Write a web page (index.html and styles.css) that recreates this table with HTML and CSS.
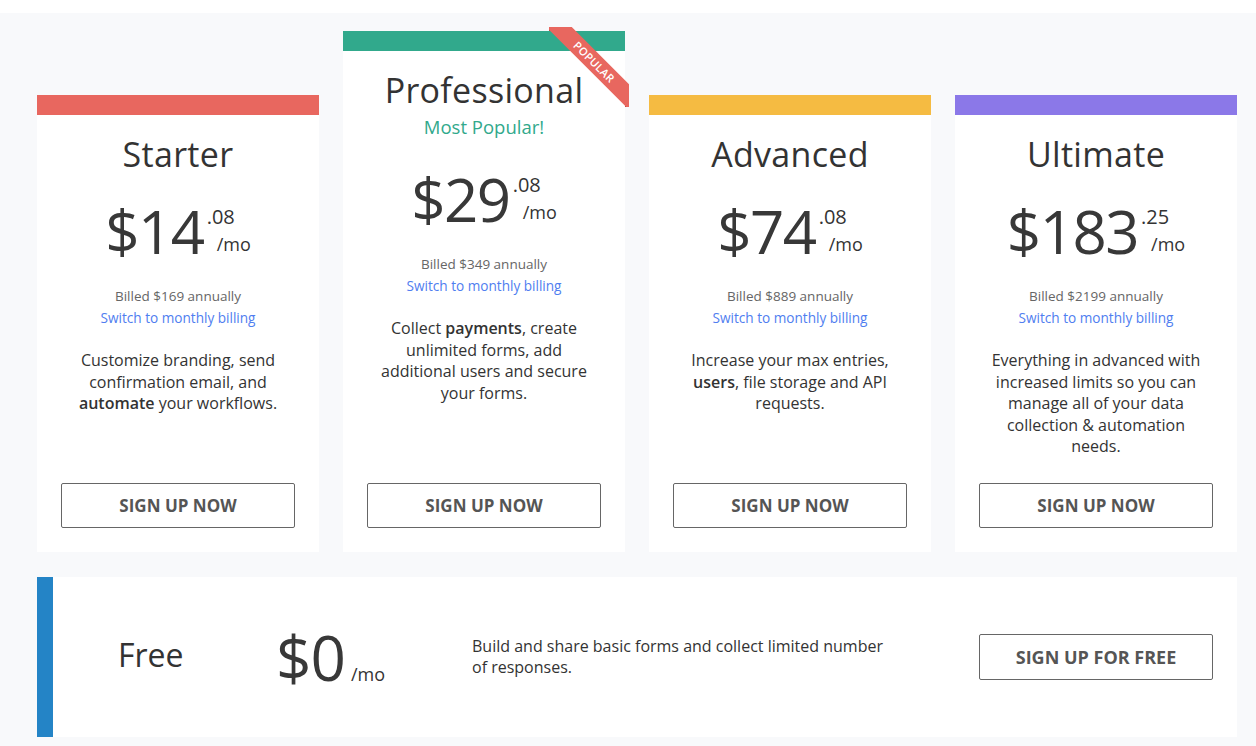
FILE: index.html
```html
<!DOCTYPE html>
<html>
<head>
<meta charset="utf-8">
<link rel="stylesheet" href="styles.css">
</head>
<body>
<div class="pricing">
  <div class="plans">
    <div class="card">
      <div class="bar red"></div>
      <div class="body">
        <h2 class="title">Starter</h2>
        <div class="price"><span class="amount">$14</span><span class="cents-col"><span class="cents">.08</span><span class="per">/mo</span></span></div>
        <div class="billed">Billed $169 annually</div>
        <a class="switch">Switch to monthly billing</a>
        <p class="desc">Customize branding, send confirmation email, and <b>automate</b> your workflows.</p>
        <button class="btn">SIGN UP NOW</button>
      </div>
    </div>
    <div class="card featured">
      <div class="bar green"></div>
      <div class="ribbon"><span class="band">POPULAR</span></div>
      <div class="body">
        <h2 class="title">Professional</h2>
        <div class="popular">Most Popular!</div>
        <div class="price"><span class="amount">$29</span><span class="cents-col"><span class="cents">.08</span><span class="per">/mo</span></span></div>
        <div class="billed">Billed $349 annually</div>
        <a class="switch">Switch to monthly billing</a>
        <p class="desc">Collect <b>payments</b>, create unlimited forms, add additional users and secure your forms.</p>
        <button class="btn">SIGN UP NOW</button>
      </div>
    </div>
    <div class="card">
      <div class="bar yellow"></div>
      <div class="body">
        <h2 class="title">Advanced</h2>
        <div class="price"><span class="amount">$74</span><span class="cents-col"><span class="cents">.08</span><span class="per">/mo</span></span></div>
        <div class="billed">Billed $889 annually</div>
        <a class="switch">Switch to monthly billing</a>
        <p class="desc">Increase your max entries, <b>users</b>, file storage and API requests.</p>
        <button class="btn">SIGN UP NOW</button>
      </div>
    </div>
    <div class="card">
      <div class="bar purple"></div>
      <div class="body">
        <h2 class="title">Ultimate</h2>
        <div class="price"><span class="amount">$183</span><span class="cents-col"><span class="cents">.25</span><span class="per">/mo</span></span></div>
        <div class="billed">Billed $2199 annually</div>
        <a class="switch">Switch to monthly billing</a>
        <p class="desc">Everything in advanced with increased limits so you can manage all of your data collection &amp; automation needs.</p>
        <button class="btn">SIGN UP NOW</button>
      </div>
    </div>
  </div>
  <div class="free">
    <div class="free-name">Free</div>
    <div class="free-price"><span class="amount">$0</span><span class="free-per">/mo</span></div>
    <p class="free-desc">Build and share basic forms and collect limited number of responses.</p>
    <button class="btn free-btn">SIGN UP FOR FREE</button>
  </div>
</div>
</body>
</html>
```

FILE: styles.css
```css
* { box-sizing: border-box; }
html, body { margin: 0; padding: 0; background: #ffffff; }
body {
  font-family: "Open Sans", "Liberation Sans", sans-serif;
  color: #333333;
  width: 1256px;
  height: 746px;
  overflow: hidden;
}
.pricing {
  margin-top: 13px;
  background: #f8f9fb;
  padding: 18px 19px 9px 37px;
}
.plans {
  display: flex;
  align-items: flex-end;
  gap: 24px;
}
.card {
  position: relative;
  width: 282px;
  height: 457px;
  background: #ffffff;
  display: flex;
  flex-direction: column;
}
.card.featured { height: 521px; }
.bar { height: 20px; flex: none; }
.red { background: #e8675f; }
.green { background: #31a98c; }
.yellow { background: #f5bb42; }
.purple { background: #8b78e8; }
.body {
  flex: 1;
  display: flex;
  flex-direction: column;
  align-items: center;
  text-align: center;
  padding: 19px 24px 24px;
}
.title {
  margin: 0;
  font-size: 34px;
  line-height: 40px;
  font-weight: 400;
  letter-spacing: 0.3px;
  color: #333333;
}
.popular {
  margin-top: 2px;
  font-size: 18.5px;
  line-height: 30px;
  color: #31a98c;
}
.price {
  display: flex;
  align-items: flex-start;
  height: 81px;
  padding-top: 25px;
  color: #333333;
}
.amount {
  font-size: 60px;
  line-height: 64px;
  font-weight: 400;
  letter-spacing: -1.5px;
  color: #383838;
}
.cents-col {
  display: flex;
  flex-direction: column;
  align-items: flex-start;
  margin-left: 3px;
  padding-top: 7px;
}
.cents { font-size: 20px; line-height: 22px; }
.per { font-size: 18px; line-height: 24px; padding-left: 10px; margin-top: 4px; }
.billed {
  margin-top: 30px;
  font-size: 13.5px;
  line-height: 22px;
  color: #666666;
}
.switch {
  font-size: 13.6px;
  line-height: 22px;
  color: #4f7ef0;
}
.desc {
  margin: 21px 0 0;
  max-width: 222px;
  font-size: 16px;
  line-height: 21.5px;
  color: #333333;
}
.desc b { font-weight: 600; }
.btn {
  margin-top: auto;
  width: 234px;
  height: 45px;
  background: #ffffff;
  border: 1px solid #666666;
  border-radius: 2px;
  font-family: "Open Sans", "Liberation Sans", sans-serif;
  font-weight: 700;
  font-size: 17px;
  color: #555555;
  flex: none;
}
.ribbon {
  position: absolute;
  top: -4px;
  right: -4px;
  width: 80px;
  height: 80px;
  overflow: hidden;
}
.ribbon::before, .ribbon::after {
  content: "";
  position: absolute;
  width: 4px;
  height: 4px;
  background: #b8423b;
}
.ribbon::before { left: 0; top: 0; }
.ribbon::after { right: 0; bottom: 0; }
.band {
  position: absolute;
  z-index: 1;
  left: -15px;
  top: 26px;
  width: 120px;
  height: 18px;
  background: #e8675f;
  color: #ffffff;
  font-size: 11px;
  font-weight: 600;
  line-height: 18px;
  text-align: center;
  letter-spacing: 0.3px;
  transform: rotate(45deg);
}
.free {
  margin-top: 25px;
  height: 160px;
  background: #ffffff;
  border-left: 16px solid #2484c6;
  display: flex;
  align-items: center;
}
.free-name {
  width: 223px;
  padding-left: 65px;
  font-size: 32px;
  line-height: 40px;
  margin-top: -4px;
}
.free-price {
  width: 196px;
  display: flex;
  align-items: baseline;
}
.free-price .amount { font-size: 62px; letter-spacing: -1px; }
.free-per { font-size: 18px; margin-left: 6px; }
.free-desc {
  margin: 0;
  width: 430px;
  padding-right: 6px;
  font-size: 16px;
  line-height: 21px;
}
.free-btn {
  margin: 0 0 0 77px;
  width: 234px;
  height: 46px;
  font-size: 18px;
}
```
